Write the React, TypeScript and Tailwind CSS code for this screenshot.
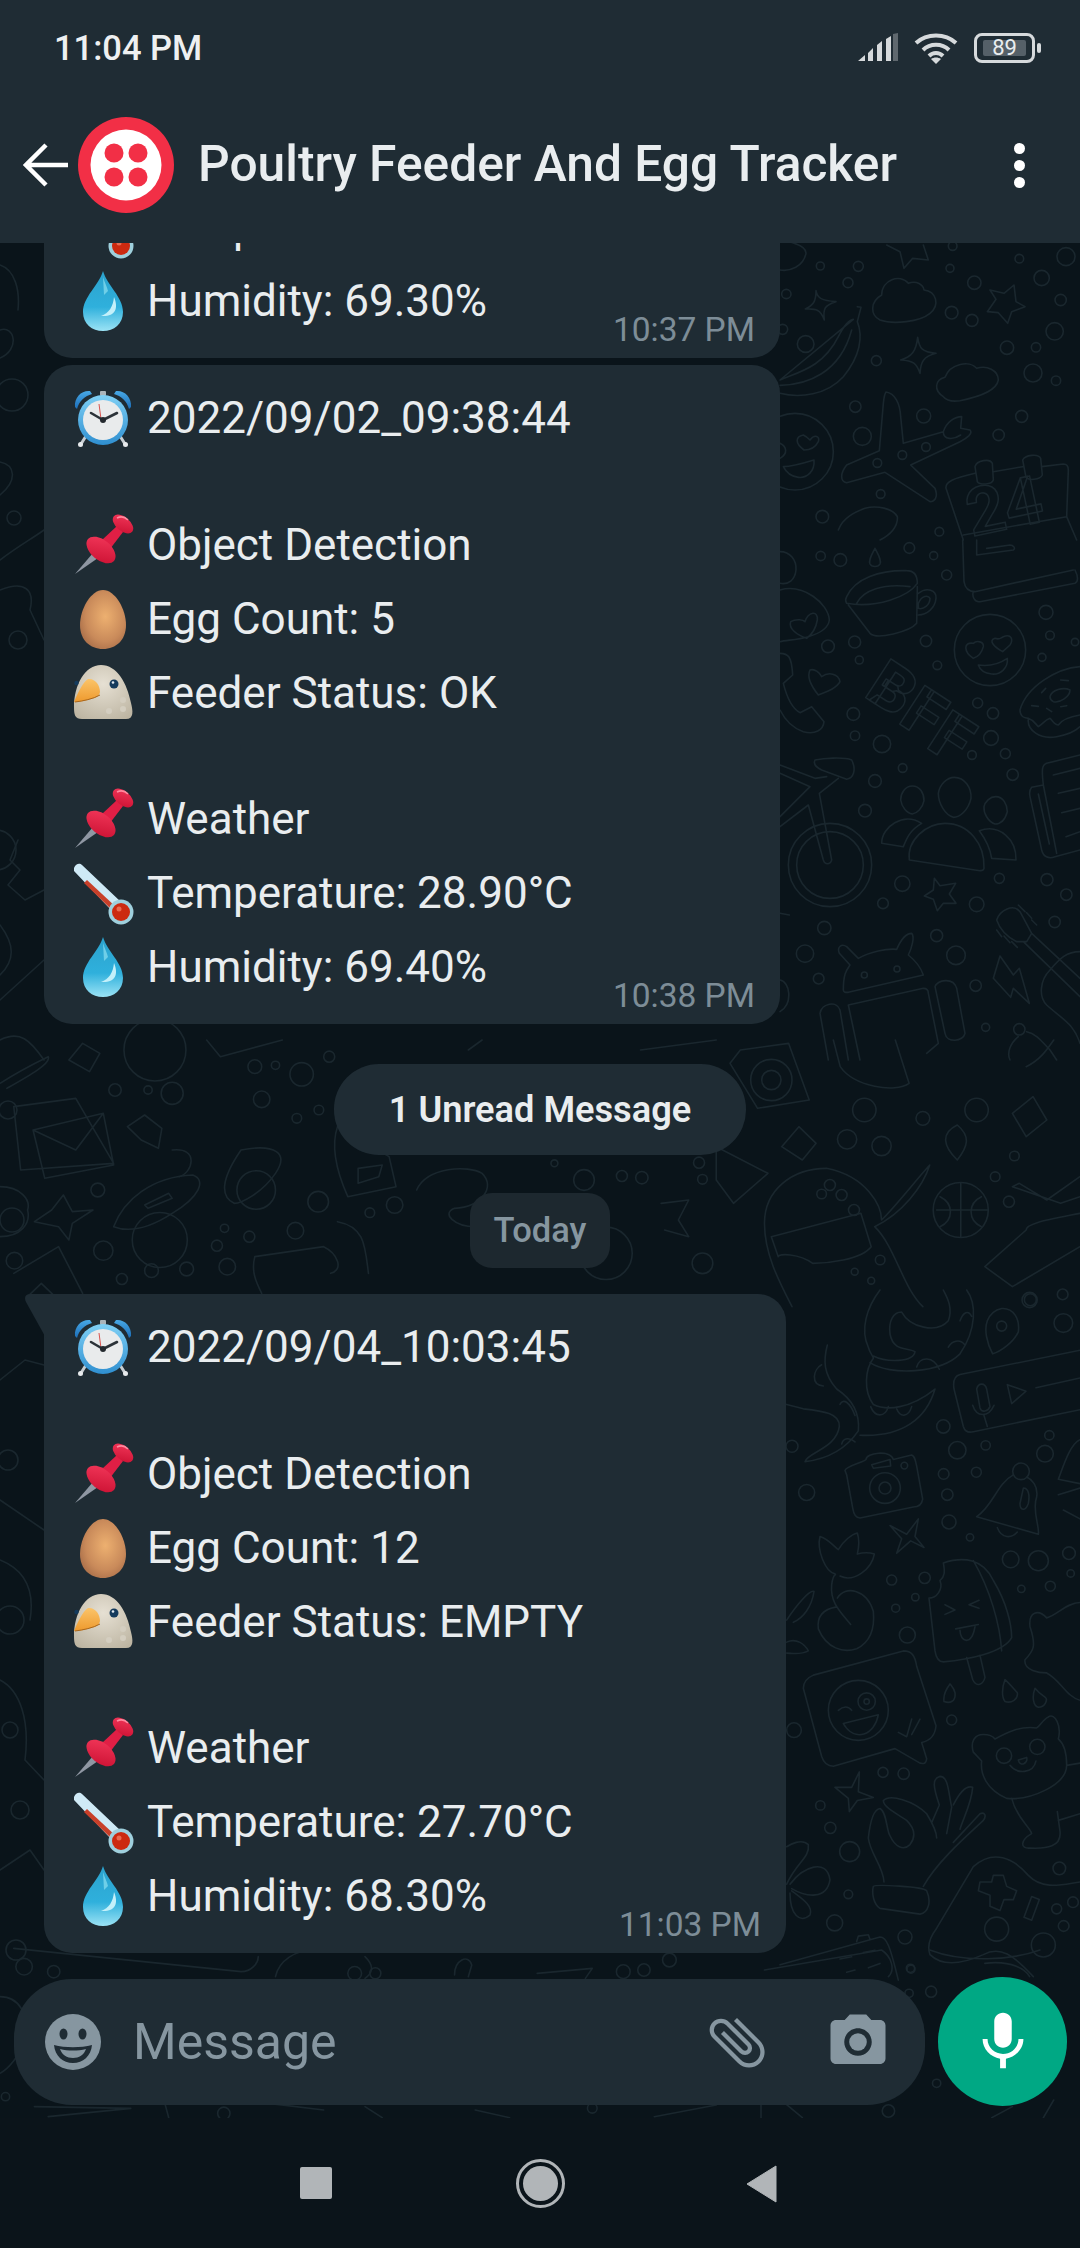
import type { ReactNode } from "react";
import { MdAttachFile, MdCameraAlt, MdMic } from "react-icons/md";

type Circle = [number, number, number];

// traced from zoomed crops, so each group keeps the crop's own scale
function Trace({ ox, oy, sx, sy, circles, paths, children }: { ox: number; oy: number; sx: number; sy: number; circles: Circle[]; paths: string[]; children?: ReactNode }) {
  return (
    <g>
      {circles.map(([x, y, r], i) => (
        <circle key={i} cx={ox + x * sx} cy={oy + y * sy} r={r * sx} />
      ))}
      <g transform={`translate(${ox} ${oy}) scale(${sx} ${sy})`}>
        {paths.map((d, i) => (
          <path key={i} d={d} />
        ))}
        {children}
      </g>
    </g>
  );
}

const topRightCircles: Circle[] = [[121,78,12],[235,79,15],[204,128,15],[19,162,14],[510,85,12],[583,128,20],[718,56,13],[858,50,27],[785,114,23],[842,180,17],[515,218,19],[576,241,18],[824,274,26],[681,323,20],[768,322,14],[759,399,27],[828,422,14],[77,312,25],[289,362,15],[226,500,17],[431,528,21],[247,589,27],[725,529,18],[656,585,17],[302,762,13],[127,830,19],[478,875,13],[367,645,13],[292,669,13],[438,621,13],[518,18,13],[8,268,15],[45,635,115]];
const topRightPaths = [
  "M108 152 C112 175 125 182 168 185 C135 195 128 205 133 240 C122 210 110 205 76 207 C100 195 108 185 108 152Z",
  "M300 240 C270 225 270 185 305 165 C305 120 360 100 385 130 C410 120 430 135 432 150 C470 155 480 195 450 220 C420 245 340 255 300 240Z",
  "M320 15 L360 35 L372 85 L398 55 L445 60 L430 15",
  "M702 135 L708 185 L735 200 L695 215 L683 250 L655 218 L622 215 L648 178 L630 150 L672 160Z",
  "M232 200 L243 202 L232 245 C250 290 240 350 190 410 C140 465 60 475 0 460 M0 420 C60 395 130 380 175 290 C190 260 205 240 220 238 Z M0 436 C80 435 180 400 215 270",
  "M413 292 C418 325 425 335 468 340 C430 350 422 365 420 400 C410 370 400 362 362 360 C395 350 408 335 413 292Z",
  "M490 470 C460 450 465 420 495 412 C510 370 570 360 590 385 C620 375 655 390 655 420 C650 450 600 470 540 482 C520 485 500 482 490 470Z",
  "M318 456 C345 460 360 490 362 530 L370 610 L490 575 C500 545 525 530 545 530 L542 565 L570 570 C580 580 560 595 540 605 L392 675 L465 745 C475 770 465 785 450 785 L315 697 L200 728 C180 725 180 700 200 675 L298 632 L310 490 C312 470 315 460 318 456Z M490 575 C490 600 520 600 542 585",
  "M72 630 C45 610 45 590 70 585 C80 590 85 595 90 600 C105 580 120 590 115 605 C105 625 90 630 72 630Z M10 680 C40 680 70 670 102 660 C105 695 80 715 55 712 C35 710 20 700 10 680Z M0 610 C20 620 25 640 0 655",
  "M0 0 C0 0 80 10 78 40 C70 80 30 95 0 90",
  "M498 745 C495 725 520 715 585 700 M640 695 L728 680 M785 680 L850 672 C862 672 865 680 865 690 L860 830 L890 900 M498 745 L550 900 M585 680 C590 660 630 655 637 670 L640 720 C635 735 600 735 592 725Z M728 660 C735 645 775 640 782 655 L787 705 C780 720 745 722 738 712Z M550 885 L860 830",
  "M175 870 C190 830 230 815 255 805 C290 795 340 805 352 830 C355 860 330 885 300 900",
];

const middleRightCircles: Circle[] = [[122,48,14],[181,60,19],[388,24,16],[461,47,12],[500,105,15],[798,217,21],[810,286,13],[885,306,11],[786,352,12],[144,319,19],[224,306,18],[238,360,12],[438,303,17],[472,376,13],[220,522,19],[225,587,14],[306,612,26],[593,489,15],[639,520,17],[633,594,22],[576,645,13],[676,641,15],[698,704,17],[368,684,13],[285,723,19],[255,812,19],[367,1031,23],[309,1090,16],[590,1093,22],[658,1015,15],[801,1019,18],[859,1064,17],[824,1146,17],[133,1164,20],[75,1241,26],[116,1316,16],[470,1187,18],[528,1246,28],[587,1337,17],[617,1462,12],[630,330,107],[150,975,125],[150,975,100],[253,1305,9],[351,1287,9],[718,1468,17]];
const middleRightPaths = [
  "M285 25 C275 45 265 60 270 72 C275 82 295 82 300 72 C305 60 295 45 285 25Z",
  "M200 170 C225 115 300 90 380 92 C400 92 412 105 412 130 C385 170 290 205 200 190 C195 182 197 175 200 170Z M230 190 C250 150 310 130 390 140 M205 195 L270 280 C290 300 390 275 410 250 L412 140 M415 160 C440 140 470 150 468 175 C465 205 440 225 415 225 M415 190 C425 165 445 165 450 175 C450 195 430 210 415 205Z",
  "M548 0 L552 125 C555 145 565 155 585 155 L880 90 M885 90 C895 110 895 125 885 130 L600 185 C585 188 575 170 580 155 M590 0 L590 45 L700 30 C708 25 700 15 690 15 L620 25",
  "M580 355 C550 335 550 305 580 310 C590 300 612 305 610 320 C605 340 595 350 580 355Z M668 335 C640 320 625 300 645 295 C660 300 660 295 670 290 C695 280 700 300 690 315Z M595 375 C630 380 660 370 682 355 C685 385 660 405 635 402 C615 400 600 390 595 375Z",
  "M0 150 C70 130 145 190 148 240 C145 265 120 280 85 290 C50 300 20 300 0 305 M80 295 C50 285 25 265 32 245 C50 235 70 240 75 245 C85 215 115 210 112 240 C108 265 100 280 80 295Z M0 35 C30 35 50 60 48 90 C45 120 25 135 0 130",
  "M0 340 C25 340 35 350 38 405 L10 430 C25 490 45 510 60 518 L95 500 L132 545 C130 570 105 585 70 575 C40 565 15 540 0 510",
  "M115 465 C95 440 80 410 90 390 C105 385 120 400 125 410 C145 395 175 400 180 425 C170 445 140 455 115 465Z",
  "M900 380 C830 385 740 440 720 510 C720 530 735 535 745 535 C740 570 780 600 830 590 C860 585 885 575 900 560 M810 470 C815 450 850 440 870 450 C870 470 840 490 820 485 C815 482 810 475 810 470Z M745 535 C760 540 765 550 775 560 C790 550 795 540 810 535 C820 545 825 555 835 555 C845 540 870 530 900 525 M785 458 L797 445 M842 420 L865 422 M755 497 L775 499 M842 500 L860 497 M800 505 L815 515",
  "M0 675 L105 715 L140 710 M0 700 L90 740 L0 830 M0 860 L85 795 L130 960 C135 975 150 975 155 960 L118 760 L175 715 M105 660 C130 655 190 650 215 660 C230 690 220 715 200 718 L125 690 C105 680 100 670 105 660Z",
  "M397 738 C420 738 432 760 432 782 C428 805 410 820 397 822 C380 820 365 800 362 780 C362 760 375 738 397 738Z M523 712 C555 712 575 745 573 775 C565 810 540 832 520 832 C495 825 475 790 475 760 C478 735 500 712 523 712Z M647 770 C670 770 682 795 682 815 C675 840 660 852 645 852 C625 845 610 820 612 800 C615 785 630 770 647 770Z",
  "M305 910 C305 860 370 815 425 850 C390 870 380 895 370 920 Z M388 960 C380 900 440 850 495 850 C565 850 615 910 612 985 C610 993 605 992 600 992 Z M598 872 C660 850 710 900 708 960 L635 955 C630 920 615 895 598 872Z",
  "M463 1015 L480 1037 L527 1030 L508 1062 L528 1090 L490 1090 L472 1112 L460 1078 L433 1068 L460 1050Z",
  "M900 645 L800 670 C785 675 785 690 790 735 L755 742 C748 750 748 760 750 770 L785 930 C790 950 805 958 825 950 L900 930 M790 735 L830 940 M775 762 L808 912 M820 705 L900 685 M835 760 L900 745 M845 818 L900 805 M858 890 L900 875",
  "M190 1350 C190 1300 200 1290 210 1275 L178 1240 C170 1220 185 1210 200 1220 L235 1255 C270 1235 320 1225 350 1228 C360 1205 375 1180 395 1180 C405 1190 395 1225 385 1245 C410 1265 425 1290 430 1305 L205 1357 C195 1358 190 1355 190 1350Z",
  "M205 1395 L430 1345 C440 1345 445 1350 445 1360 L475 1510 L440 1540 M205 1395 L240 1560 M465 1340 C470 1320 520 1310 530 1345 L555 1480 C550 1505 500 1510 495 1480Z M120 1420 C125 1390 170 1380 180 1410 L205 1560 M120 1420 L145 1560",
  "M660 1248 L640 1315 L692 1372 L700 1345 L748 1390 L718 1285 L700 1305Z",
  "M650 1140 C660 1110 700 1090 720 1115 L755 1180 L740 1205 L710 1205 C680 1190 660 1170 650 1140Z M730 1205 L900 1370 M755 1180 L900 1315 M715 1095 L735 1115 M740 1118 L755 1135 M755 1140 L770 1155 M650 1170 L665 1190 M672 1188 L690 1208 M695 1205 L712 1222",
  "M900 1235 C860 1235 840 1255 810 1290 C780 1320 775 1370 800 1395 C850 1440 880 1450 900 1510",
  "M715 1490 C690 1510 680 1540 690 1560 M740 1475 C770 1480 790 1510 810 1530 L830 1560 M0 1320 C30 1325 40 1390 0 1415 M0 1120 L28 1125",
];

const lowerRightCircles: Circle[] = [[850,75,28],[751,22,18],[848,10,16],[490,310,20],[532,364,26],[617,353,14],[808,330,14],[795,372,25],[491,418,16],[502,465,17],[507,527,21],[589,414,15],[570,562,11],[692,612,25],[775,615,30],[867,598,19],[872,644,11],[724,679,11],[811,673,15],[335,659,15],[434,654,17],[406,698,11],[347,723,12],[382,784,24],[515,977,15],[309,1096,15],[371,1099,17],[121,1171,14],[151,1222,17],[209,1276,30],[205,1373,13],[164,1438,24],[375,1470,21],[393,1543,12],[838,1314,19],[36,355,18],[42,1000,22],[80,460,24],[665,82,15],[723,412,25],[315,450,46],[315,450,18],[373,399,10],[235,955,90],[260,935,26],[260,935,8],[672,1058,23],[772,1038,23],[650,1452,36],[790,1488,36],[830,1406,15],[879,1391,16],[851,1445,16]];
const lowerRightPaths = [
  "M300 0 C260 40 240 90 265 130 C270 145 280 150 280 155 C255 180 250 230 280 260 C320 275 390 270 465 225 C440 290 370 335 240 330 M270 165 C330 195 480 190 540 145 C590 90 590 30 560 0 M280 150 C320 165 400 165 405 140 C380 130 340 140 330 100 C325 70 340 50 365 50 C390 85 470 100 505 70 C520 40 500 15 490 0 M505 130 C515 115 540 110 555 125 M540 70 C550 50 565 45 575 60 M272 265 C285 290 315 290 325 265 M350 270 C360 290 385 290 395 265 M410 175 C420 150 460 150 478 180",
  "M665 42 C700 40 720 65 715 95 C700 120 660 140 638 145 C620 120 612 90 622 70 C630 55 645 45 665 42Z",
  "M900 137 L540 192 C525 195 518 205 522 225 L550 310 C555 322 565 325 580 322 L900 272 M590 225 C595 210 615 210 620 225 L630 265 C625 275 605 280 600 268Z M578 262 C590 290 625 290 642 262 M612 285 L622 310 M682 215 L738 230 L695 258Z M768 222 L900 200",
  "M200 420 L195 410 C197 400 250 392 258 385 C258 370 330 362 340 385 L395 375 C405 378 405 385 410 400 L428 475 C425 490 410 493 400 493 L240 518 C225 518 220 505 218 495Z M275 397 L330 385 L332 400 L280 405Z",
  "M700 420 C650 440 640 490 590 515 L775 555 C780 540 755 500 770 470 C775 445 755 430 740 425 M652 540 C665 565 695 565 712 550 M730 450 C745 450 750 465 745 485 C735 505 720 500 720 485Z",
  "M330 535 L380 555 L415 520 L405 560 L432 585 L392 570 L350 598 L365 565Z",
  "M490 620 C550 605 610 610 640 660 C680 710 695 760 695 790 C670 825 560 840 490 845 C475 845 468 835 465 820 L447 700 C470 700 490 680 480 660 C495 650 495 640 490 620Z M580 615 C630 680 660 760 665 820 M560 835 L578 885 C590 905 610 895 615 880 L600 830 M495 715 L525 727 L495 737 M597 705 L567 715 L597 723 M527 770 L595 760 M540 773 C540 800 575 810 585 765",
  "M212 760 C180 730 150 710 155 670 C160 640 170 650 165 645 C135 640 110 590 120 560 C145 565 165 585 175 590 C190 570 215 555 232 552 C240 570 235 590 232 600 C255 595 275 598 283 600 C275 635 220 665 180 650 M172 700 C195 670 260 680 280 730 C285 770 270 800 230 815 C190 825 140 815 115 770 C110 740 130 725 170 720",
  "M142 125 C130 160 130 190 170 225 C220 250 240 280 235 320 C190 370 130 385 75 390 C80 370 170 360 178 310 C180 280 130 275 70 270 L20 260 M125 170 C100 180 90 215 130 218 M180 260 C190 245 210 255 225 285 M185 350 C190 335 210 335 225 345",
  "M20 750 C50 715 90 680 102 685 C95 720 70 745 40 755 M20 800 C50 790 75 805 85 820 C60 830 35 825 20 825",
  "M70 905 C70 890 85 880 100 875 L370 820 C395 820 405 830 410 855 L468 990 C465 1015 445 1025 425 1028 L440 1065 C438 1080 425 1075 420 1075 L345 1042 L160 1082 C140 1082 130 1072 125 1060Z M175 955 C190 945 205 945 215 955 M190 985 L295 965 C285 1010 225 1030 190 985Z M355 1005 L380 1015 L395 975 M395 1010 L420 975",
  "M238 1095 L235 1140 L280 1153 L232 1160 L208 1185 L205 1155 L165 1130 L215 1130Z",
  "M280 1355 C285 1350 430 1355 440 1365 C455 1390 445 1415 420 1418 L300 1405 C280 1395 275 1370 280 1355Z M312 1345 C310 1310 270 1280 265 1245 C270 1210 280 1180 300 1178 C320 1185 320 1230 330 1240 C345 1265 370 1275 390 1260 C410 1240 400 1220 380 1205 C350 1190 310 1175 310 1160 C330 1145 400 1160 440 1190 C460 1215 470 1235 470 1245 M430 1355 C470 1300 560 1240 610 1205 C620 1195 615 1185 600 1190 L520 1255 M455 1210 L478 1170 C460 1130 455 1110 480 1105 C505 1105 505 1140 515 1175 L500 1235 M520 1170 C540 1140 560 1125 578 1130 C575 1165 550 1200 540 1225",
  "M450 1510 C440 1490 450 1470 470 1450 L580 1310 C640 1270 700 1290 745 1330 C790 1365 850 1350 900 1345 M450 1510 C490 1540 550 1530 610 1510 C660 1490 700 1510 760 1560 M640 1330 L670 1330 L680 1355 L710 1365 L700 1385 L672 1385 L660 1410 L630 1400 L630 1375 L595 1365 L600 1345 L635 1345Z M755 1378 L778 1385 L755 1432 L732 1425Z",
  "M610 1010 C585 1010 570 1025 580 1050 L605 1070 C600 1100 620 1135 680 1155 C750 1160 860 1125 860 1080 C860 1050 850 1030 835 1020 C845 990 825 960 805 970 C790 975 780 990 770 995 C720 990 680 1005 645 1020 C640 1015 630 1010 610 1010Z M715 1068 L740 1062 C745 1075 720 1085 715 1068Z M690 1080 C710 1100 760 1100 768 1070 M695 1155 C710 1200 750 1220 755 1235 C720 1250 720 1270 750 1268 C800 1270 845 1265 840 1230 L832 1185 M860 1080 L900 1075 M835 1205 L900 1190",
  "M900 710 C860 710 830 740 800 745 C775 725 745 730 750 765 C770 810 760 820 735 840 C730 865 780 870 800 870 C840 885 860 925 900 932",
  "M510 895 C495 910 490 925 492 935 C510 940 528 935 525 915 C522 905 515 900 510 895Z M675 885 C665 905 665 925 675 935 C695 940 715 930 712 915 C700 905 690 895 675 885Z M765 905 C755 925 760 945 775 948 C795 948 805 930 795 925 C785 920 775 915 765 905Z",
  "M0 1533 L300 1470 C320 1470 330 1490 355 1568 M230 1480 L235 1468 L265 1465 L270 1475 M180 1520 L215 1515 M250 1505 L285 1500 M200 1550 L225 1545 M265 1540 L300 1530",
  "M20 1350 C50 1300 90 1290 85 1260 C65 1245 30 1260 20 1265 M30 1350 C70 1310 140 1290 150 1340 C140 1385 80 1380 35 1360 M35 1365 C70 1385 100 1400 90 1420 C60 1440 30 1420 30 1370",
  "M900 340 C870 350 850 400 835 430 L900 440 M835 465 L900 450 M850 500 L900 520",
];

const bandCircles: Circle[] = [[225,30,45],[478,50,8],[370,80,10],[400,76,6],[438,103,17],[167,150,9],[215,150,6],[250,160,16],[380,178,12],[463,210,7],[431,235,7],[142,450,10],[573,495,12],[537,518,7],[462,485,15],[326,565,6],[429,572,12],[362,590,8],[315,617,8],[150,632,14],[220,692,10],[271,687,10],[330,680,12],[177,717,8],[21,662,12],[1255,210,17],[1230,298,14],[1280,318,14],[1340,235,10],[1418,210,17],[1473,348,7],[1445,410,7],[848,420,15],[903,408,8],[932,413,9],[805,370,5],[1015,368,8],[1020,418,7],[1205,435,8],[1193,462,7],[1222,465,8],[1240,510,8],[1465,485,8],[1020,670,15],[1278,660,7],[1241,695,5],[1265,722,5],[1495,780,11],[232,600,40],[372,450,28],[1395,510,40],[1120,120,30],[1120,120,14],[880,640,38]];
const bandPaths = [
  "M0 130 C30 90 60 60 70 50 C75 70 40 110 10 145",
  "M20 200 L110 175 L165 370 L30 390 Z M48 270 L150 220 L165 375 L65 415Z M48 270 L110 330 L150 220",
  "M210 225 L235 265 L230 325 L205 300 L185 260Z M120 10 L145 40 L130 95 L100 60Z",
  "M165 560 C180 480 220 410 280 405 C300 420 290 470 250 520 C220 560 190 580 165 560Z M210 495 L245 460 L250 475 L215 505Z",
  "M250 330 C290 320 280 400 260 410 M350 330 C400 310 420 340 400 400 C380 460 350 490 340 490 C320 470 320 420 350 330Z",
  "M92 465 L105 515 L135 510 L105 550 L100 600 L85 560 L50 545 L75 510Z M0 440 C30 440 45 480 40 510 C45 550 30 590 0 590",
  "M490 260 L565 350 L575 440 L505 470 C490 400 480 320 490 260Z M520 385 L555 375 L550 410 L520 430Z",
  "M605 450 C620 380 680 375 700 400 C720 440 700 500 660 505 C640 520 660 560 690 560",
  "M1075 30 L1145 10 L1175 180 L1100 205 L1060 70Z M300 0 L320 50 L410 0",
  "M1120 590 L1250 520 L1265 620 C1250 660 1200 670 1180 670 C1160 640 1130 640 1130 650Z M1110 550 C1110 450 1150 385 1200 385 C1260 410 1280 500 1280 540 C1300 500 1330 420 1350 375 C1340 440 1310 520 1270 560 C1300 620 1310 740 1340 800 M1110 550 C1110 640 1130 720 1150 800",
  "M1360 510 L1435 510 M1395 430 L1395 590 M1365 470 C1385 490 1385 540 1365 560 M1425 470 C1405 490 1405 540 1425 560",
  "M1568 410 L1520 480 L1480 430 L1470 440 L1540 490 L1568 470 M1568 520 C1520 540 1490 550 1490 570 L1430 680 L1470 740 L1568 620",
  "M1160 260 L1185 310 L1165 360 L1135 320Z M1390 255 C1410 290 1405 320 1390 360 C1370 320 1365 280 1390 255Z M1500 170 L1520 240 L1490 290 L1470 220Z",
  "M1210 0 L1220 80 C1240 140 1300 160 1320 130 L1300 0 M1530 0 C1520 30 1510 60 1490 80",
  "M490 545 C530 560 530 620 535 700 M370 650 L470 620 C490 640 500 690 480 700 M370 650 C365 690 370 720 380 760 M960 490 L1000 480 L985 540 L1000 590 L965 570",
  "M20 700 L85 620 L100 680 L120 760 M40 770 L60 730 L80 770",
  "M680 30 L700 0 M930 30 L1040 0 M1040 320 L1115 400 L1065 490 L1040 420 Z",
];

const bottomCircles: Circle[] = [[35,80,12],[78,95,9],[515,100,10],[545,100,8],[905,95,10],[935,90,9],[972,60,10],[1322,85,6],[1352,155,8],[1320,160,6],[1360,430,6],[1290,513,9],[325,520,9],[860,505,7],[8,470,6]];
const bottomPaths = [
  "M20 25 L350 95 C365 95 375 70 375 50 M400 110 C405 60 430 30 455 30 M530 50 C545 80 540 100 530 115 M660 105 C660 60 680 40 685 75 L680 110 M780 100 L860 85 L850 115",
  "M1110 90 L1280 30 C1295 50 1300 90 1290 110 M1350 30 C1400 70 1470 60 1510 30 M1430 70 C1470 60 1490 90 1495 110",
  "M50 500 L190 505 L70 530 M240 495 L245 533 M470 510 L390 490 M530 500 L555 533 M690 510 L740 533 M950 530 L1040 495 M1105 490 L1105 533 M1140 490 L1165 533 M1440 533 L1470 500 M1515 533 L1530 480",
  "M0 170 C30 170 40 230 40 280 C30 350 10 390 0 400",
];

// the strip left of the bubbles, page coordinates
const leftCircles: Circle[] = [[14,518,7],[12,395,16],[18,640,9],[-4,850,20],[8,1110,9],[8,1460,10],[10,1620,14],[20,1810,9],[16,1950,10],[12,1220,12],[10,1730,8]];
const leftPaths = [
  "M0 265 C15 270 20 290 18 310 M0 330 C15 325 20 350 0 358 M0 462 C15 465 18 480 0 495 M0 560 C20 545 30 540 44 530 M0 590 C25 580 35 590 30 610 L44 640",
  "M18 840 L10 860 L20 870 L8 885 L25 900 L44 890 M0 925 C15 945 15 960 0 975 M0 1000 L44 960 M0 1040 C20 1030 30 1040 44 1060",
  "M0 1380 L25 1360 L44 1365 M0 1500 L44 1530 M0 1560 C25 1570 35 1590 30 1620 M0 1680 C20 1690 30 1720 25 1760 L44 1780 M0 1870 L30 1850 L44 1870",
];

function Wallpaper() {
  return (
    <svg
      className="absolute inset-0 h-full w-full [&_*]:[vector-effect:non-scaling-stroke]"
      viewBox="0 243 1080 1875"
      fill="none"
      stroke="#1a272e"
      strokeWidth="1.6"
      strokeLinejoin="round"
      strokeLinecap="round"
      aria-hidden="true"
    >
      <Trace ox={780} oy={240} sx={1 / 3} sy={1 / 3} circles={topRightCircles} paths={topRightPaths}>
        <text x="575" y="890" transform="rotate(-12 575 890)" fontFamily="Roboto, sans-serif" fontSize="200" fontWeight="700">24</text>
      </Trace>
      <Trace ox={780} oy={540} sx={1 / 3} sy={1 / 3} circles={middleRightCircles} paths={middleRightPaths}>
        <text transform="translate(248 467) rotate(33)" fontFamily="Roboto, sans-serif" fontSize="195" fontWeight="900">B</text>
        <text transform="translate(350 547) rotate(33)" fontFamily="Roboto, sans-serif" fontSize="195" fontWeight="900">F</text>
        <text transform="translate(434 620) rotate(33)" fontFamily="Roboto, sans-serif" fontSize="195" fontWeight="900">F</text>
      </Trace>
      <Trace ox={780} oy={1290} sx={1 / 3} sy={1 / 2.272} circles={lowerRightCircles} paths={lowerRightPaths} />
      <Trace ox={0} oy={1040} sx={1 / 1.452} sy={1 / 3} circles={bandCircles} paths={bandPaths} />
      <Trace ox={0} oy={1940} sx={1 / 1.452} sy={1 / 3} circles={bottomCircles} paths={bottomPaths} />
      <Trace ox={0} oy={0} sx={1} sy={1} circles={leftCircles} paths={leftPaths} />
    </svg>
  );
}

function EmojiDefs() {
  return (
    <svg className="absolute h-0 w-0" aria-hidden="true">
      <defs>
        <linearGradient id="clockBlue" x1="0" y1="0" x2="0" y2="1">
          <stop offset="0" stopColor="#7fd0f5" />
          <stop offset="1" stopColor="#2f8fd0" />
        </linearGradient>
        <linearGradient id="bellBlue" x1="0" y1="0" x2="0" y2="1">
          <stop offset="0" stopColor="#48a9e6" />
          <stop offset="1" stopColor="#1b6db8" />
        </linearGradient>
        <linearGradient id="pinRed" x1="0" y1="0" x2="1" y2="1">
          <stop offset="0" stopColor="#f4395c" />
          <stop offset="1" stopColor="#c90f30" />
        </linearGradient>
        <radialGradient id="eggFill" cx="0.55" cy="0.45" r="0.65">
          <stop offset="0" stopColor="#edb070" />
          <stop offset="0.65" stopColor="#c98a5a" />
          <stop offset="1" stopColor="#a56b47" />
        </radialGradient>
        <radialGradient id="birdFill" cx="0.5" cy="0.35" r="0.75">
          <stop offset="0" stopColor="#e6e0d3" />
          <stop offset="1" stopColor="#bdb5a2" />
        </radialGradient>
        <linearGradient id="beakFill" x1="0" y1="0" x2="0" y2="1">
          <stop offset="0" stopColor="#fbc469" />
          <stop offset="1" stopColor="#ee9a2e" />
        </linearGradient>
        <linearGradient id="dropFill" x1="0" y1="0" x2="0" y2="1">
          <stop offset="0" stopColor="#2ba2cd" />
          <stop offset="0.6" stopColor="#2fb0dc" />
          <stop offset="1" stopColor="#9be3f5" />
        </linearGradient>
      </defs>
    </svg>
  );
}

function Clock() {
  return (
    <svg width="64" height="64" viewBox="0 0 64 64">
      <path d="M4 21 C3 11 11 4 19 5 L21 8 C14 10 8 15 6 23Z" fill="url(#bellBlue)" />
      <path d="M60 21 C61 11 53 4 45 5 L43 8 C50 10 56 15 58 23Z" fill="url(#bellBlue)" />
      <rect x="29" y="5" width="6" height="5" rx="1" fill="#aab4ba" />
      <path d="M15 50 L10 58 M49 50 L54 58" stroke="#c8ced2" strokeWidth="3" />
      <circle cx="9.5" cy="58.5" r="2.5" fill="#e7eaec" />
      <circle cx="54.5" cy="58.5" r="2.5" fill="#e7eaec" />
      <circle cx="32" cy="34" r="25" fill="url(#clockBlue)" />
      <circle cx="32" cy="34" r="20" fill="#e9ebec" />
      <path d="M30 33 L28 18" stroke="#d9534f" strokeWidth="1" />
      <path d="M32 34 L20 27 M32 34 L46 27" stroke="#2b3238" strokeWidth="2.6" strokeLinecap="round" />
      <circle cx="32" cy="34" r="3" fill="#23292e" />
    </svg>
  );
}

function Pin() {
  return (
    <svg width="64" height="64" viewBox="0 0 64 64">
      <path d="M4 61 L22 40 L27 45Z" fill="#8f97a3" />
      <path d="M31 27 L46 13 L52 19 L39 36Z" fill="#e01f45" />
      <ellipse cx="30" cy="37" rx="17" ry="10" transform="rotate(40 30 37)" fill="url(#pinRed)" />
      <ellipse cx="52" cy="11" rx="12" ry="7" transform="rotate(40 52 11)" fill="url(#pinRed)" />
      <path d="M46 5 C50 3 54 4 57 7" stroke="#ff8a9f" strokeWidth="1.6" fill="none" />
    </svg>
  );
}

function Egg() {
  return (
    <svg width="64" height="64" viewBox="0 0 64 64">
      <path d="M32 3 C44 3 55 22 55 38 C55 53 45 62 32 62 C19 62 9 53 9 38 C9 22 20 3 32 3Z" fill="url(#eggFill)" />
    </svg>
  );
}

function Bird() {
  return (
    <svg width="64" height="64" viewBox="0 0 64 64">
      <path d="M30 4 C46 4 56 22 60 42 C62 50 63 58 55 58 L11 58 C4 58 3 54 3 46 C3 24 14 4 30 4Z" fill="url(#birdFill)" />
      <circle cx="43" cy="23" r="4.5" fill="#143a5c" />
      <circle cx="42" cy="21.5" r="1.3" fill="#dfe8ef" />
      <circle cx="5.5" cy="22" r="2.2" fill="#143a5c" />
      <path d="M17 18 C24 17 29 24 29 31 C28 36 24 37 20 38 C14 40 8 41 3 41 C6 34 11 22 17 18Z" fill="url(#beakFill)" />
      <path d="M4 41 C12 40 22 38 29 34" stroke="#a8661c" strokeWidth="1" fill="none" />
      <circle cx="52" cy="39" r="3" fill="#d4cec0" />
      <circle cx="52" cy="48" r="3" fill="#d4cec0" />
      <circle cx="38" cy="50" r="3" fill="#d4cec0" />
    </svg>
  );
}

function Thermometer() {
  return (
    <svg width="64" height="64" viewBox="0 0 64 64">
      <path d="M3 7 C5 2 9 2 11 4 L50 41 L41 50 L3 10Z" fill="#cfeaf6" />
      <path d="M16 19 L45 46 L41 49 L13 22Z" fill="#c8402a" />
      <circle cx="50" cy="51" r="12.5" fill="#9fd0dd" />
      <circle cx="50" cy="51" r="9" fill="#cc2a10" />
      <circle cx="48" cy="48" r="2.5" fill="#e86a50" />
    </svg>
  );
}

function Drop() {
  return (
    <svg width="64" height="64" viewBox="0 0 64 64">
      <path d="M32 2 C36 16 52 28 52 43 C52 55 43 62 32 62 C21 62 12 55 12 43 C12 28 28 16 32 2Z" fill="url(#dropFill)" />
      <path d="M43 28 C48 40 44 48 30 47 C38 44 42 38 43 28Z" fill="#c3f0fa" />
      <path d="M32 8 C34 14 36 18 37 22 L33 26Z" fill="#6fcfe8" />
    </svg>
  );
}

function Row({ icon, text }: { icon: ReactNode; text: string }) {
  return (
    <div className="flex h-[74px] items-center pl-[27px]">
      <div className="h-[64px] w-[64px] shrink-0">{icon}</div>
      <span className="ml-[12px] whitespace-nowrap text-[44px] leading-none text-[#e9edef]">{text}</span>
    </div>
  );
}

function Stamp({ time }: { time: string }) {
  return <span className="absolute right-[25px] bottom-[8px] text-[33.5px] leading-[40px] text-[#7d8d97]">{time}</span>;
}

// only the tail of the first message is on screen, the rest is scrolled away under the header
function ScrolledReport({ temp, hum, time }: { temp: string; hum: string; time: string }) {
  return (
    <div className="relative ml-[44px] w-[736px] shrink-0 rounded-b-[28px] bg-[#1f2c34] pb-5">
      <Row icon={<Thermometer />} text={`Temperature: ${temp}`} />
      <Row icon={<Drop />} text={`Humidity: ${hum}`} />
      <Stamp time={time} />
    </div>
  );
}

function Report({ stamp, eggs, status, temp, hum, time, first }: { stamp: string; eggs: string; status: string; temp: string; hum: string; time: string; first?: boolean }) {
  return (
    <div className={`relative ml-[44px] bg-[#1f2c34] pt-4 pb-5 ${first ? "w-[742px] rounded-[28px] rounded-tl-none" : "w-[736px] rounded-[28px]"}`}>
      {first && (
        <svg className="absolute top-0 -left-[20px]" width="22" height="48" viewBox="0 0 22 48">
          <path d="M22 0 L6 0 C1 0 0 4 2 8 L22 44Z" fill="#1f2c34" />
        </svg>
      )}
      <Row icon={<Clock />} text={stamp} />
      <div className="h-[53px]" />
      <Row icon={<Pin />} text="Object Detection" />
      <Row icon={<Egg />} text={`Egg Count: ${eggs}`} />
      <Row icon={<Bird />} text={`Feeder Status: ${status}`} />
      <div className="h-[52px]" />
      <Row icon={<Pin />} text="Weather" />
      <Row icon={<Thermometer />} text={`Temperature: ${temp}`} />
      <Row icon={<Drop />} text={`Humidity: ${hum}`} />
      <Stamp time={time} />
    </div>
  );
}

function StatusIcons() {
  return (
    <div className="flex items-center">
      <svg width="40" height="30" viewBox="0 0 40 30">
        <path d="M0 28 L7 22 V28Z M10 20 L15 15 V28 H10Z M19 12 L24 8 V28 H19Z" fill="#d6dadc" />
        <path d="M28 6 L33 3 V28 H28Z" fill="#d6dadc" />
        <path d="M35 1 L40 0 V28 H35Z" fill="#5f686e" />
      </svg>
      <svg className="ml-[16px]" width="44" height="32" viewBox="0 0 44 32" fill="none" stroke="#d6dadc" strokeWidth="4">
        <path d="M2 11 C13 1 31 1 42 11" />
        <path d="M9 18 C16 11 28 11 35 18" />
        <path d="M15 24 C19 20 25 20 29 24" />
        <path d="M22 32 L17 27 C20 25 24 25 27 27Z" fill="#d6dadc" stroke="none" />
      </svg>
      <div className="relative ml-[16px] flex h-[30px] w-[61px] items-center justify-center rounded-[8px] border-[3px] border-[#d6dadc]">
        <div className="flex h-[16px] w-[43px] items-center justify-center rounded-[2px] bg-[#556068] text-[22px] leading-none text-[#e9edef]">89</div>
      </div>
      <div className="ml-[2px] h-[10px] w-[4px] rounded-[2px] bg-[#d6dadc]" />
    </div>
  );
}

function Header() {
  return (
    <header className="relative z-10 h-[243px] shrink-0 bg-[#1f2c34]">
      <div className="flex h-[96px] items-center justify-between pr-[39px] pl-[54px]">
        <span className="text-[34.5px] leading-none font-medium text-[#eef0f1]">11:04 PM</span>
        <StatusIcons />
      </div>
      <div className="mt-[21px] flex h-[96px] items-center pl-[23px]">
        <svg width="46" height="44" viewBox="0 0 46 44" fill="none" stroke="#ffffff" strokeWidth="4.5">
          <path d="M45 22 H4 M23 2 L3 22 L23 42" />
        </svg>
        <svg className="ml-[9px]" width="96" height="96" viewBox="0 0 96 96">
          <circle cx="48" cy="48" r="48" fill="#f22f46" />
          <circle cx="48" cy="48" r="35.5" fill="#ffffff" />
          <circle cx="36" cy="36" r="9.5" fill="#f22f46" />
          <circle cx="60" cy="36" r="9.5" fill="#f22f46" />
          <circle cx="36" cy="60" r="9.5" fill="#f22f46" />
          <circle cx="60" cy="60" r="9.5" fill="#f22f46" />
        </svg>
        <h1 className="ml-[24px] whitespace-nowrap text-[49.7px] leading-none font-medium text-[#e9edef]">Poultry Feeder And Egg Tracker</h1>
        <div className="mr-[55px] ml-auto flex flex-col gap-[6px]">
          <div className="h-[11px] w-[11px] rounded-full bg-white" />
          <div className="h-[11px] w-[11px] rounded-full bg-white" />
          <div className="h-[11px] w-[11px] rounded-full bg-white" />
        </div>
      </div>
    </header>
  );
}

function Composer() {
  return (
    <div className="relative flex items-end pr-[12px] pb-[12px] pl-[14px]">
      <div className="mb-px flex h-[126px] w-[911px] items-center rounded-[58px] bg-[#1f2c34] pr-[34px] pl-[31px]">
        <svg width="56" height="56" viewBox="0 0 56 56">
          <circle cx="28" cy="28" r="28" fill="#8696a0" />
          <ellipse cx="18.5" cy="20" rx="4" ry="5.5" fill="#1f2c34" />
          <ellipse cx="37.5" cy="20" rx="4" ry="5.5" fill="#1f2c34" />
          <path d="M9 31 C20 34 36 34 47 31 C46 42 38 49 28 49 C18 49 10 42 9 31Z" fill="#1f2c34" />
          <path d="M15 35 C23 37 33 37 41 35 C39 41 34 44 28 44 C22 44 17 41 15 35Z" fill="#8696a0" />
        </svg>
        <span className="ml-[32px] text-[50px] leading-none text-[#8696a0]">Message</span>
        <MdAttachFile className="ml-auto -rotate-45 text-[68px] text-[#8696a0]" />
        <MdCameraAlt className="ml-[54px] text-[66px] text-[#8696a0]" />
      </div>
      <div className="ml-[13px] flex h-[129px] w-[129px] items-center justify-center rounded-full bg-[#00a884]">
        <MdMic className="text-[70px] text-white" />
      </div>
    </div>
  );
}

function NavBar() {
  return (
    <nav className="relative flex h-[130px] shrink-0 items-start bg-[#0b141a] pt-[41px] pl-[300px]">
      <div className="mt-[8px] h-[32px] w-[32px] rounded-[2px] bg-[#b1b5b8]" />
      <div className="ml-[184px] flex h-[49px] w-[49px] items-center justify-center rounded-full border-[3px] border-[#b1b5b8]">
        <div className="h-[35px] w-[35px] rounded-full bg-[#b1b5b8]" />
      </div>
      <svg className="mt-[6px] ml-[180px]" width="32" height="38" viewBox="0 0 32 38">
        <path d="M31 1 L31 37 L2 19Z" fill="#b1b5b8" stroke="#b1b5b8" strokeLinejoin="round" />
      </svg>
    </nav>
  );
}

export default function App() {
  return (
    <div className="flex h-[2248px] w-[1080px] flex-col overflow-hidden bg-[#0b141a] font-['Roboto',sans-serif]">
      <EmojiDefs />
      <Header />
      <main className="relative flex min-h-0 flex-1 flex-col bg-[#0a141a]">
        <Wallpaper />
        <div className="relative flex min-h-0 flex-1 flex-col justify-end overflow-hidden pb-[24px]">
          <ScrolledReport temp="28.90°C" hum="69.30%" time="10:37 PM" />
          <div className="mt-[7px]">
            <Report stamp="2022/09/02_09:38:44" eggs="5" status="OK" temp="28.90°C" hum="69.40%" time="10:38 PM" />
          </div>
          <div className="mt-[40px] flex justify-center">
            <div className="flex h-[91px] w-[412px] items-center justify-center rounded-[45px] bg-[#1f2c34] pt-[2px] text-[36.2px] font-semibold text-[#e9edef]">1 Unread Message</div>
          </div>
          <div className="mt-[38px] flex justify-center">
            <div className="flex h-[75px] w-[140px] items-center justify-center rounded-[22px] bg-[#1d282f] text-[34.5px] font-medium text-[#8696a0]">Today</div>
          </div>
          <div className="mt-[26px]">
            <Report first stamp="2022/09/04_10:03:45" eggs="12" status="EMPTY" temp="27.70°C" hum="68.30%" time="11:03 PM" />
          </div>
        </div>
        <Composer />
      </main>
      <NavBar />
    </div>
  );
}
